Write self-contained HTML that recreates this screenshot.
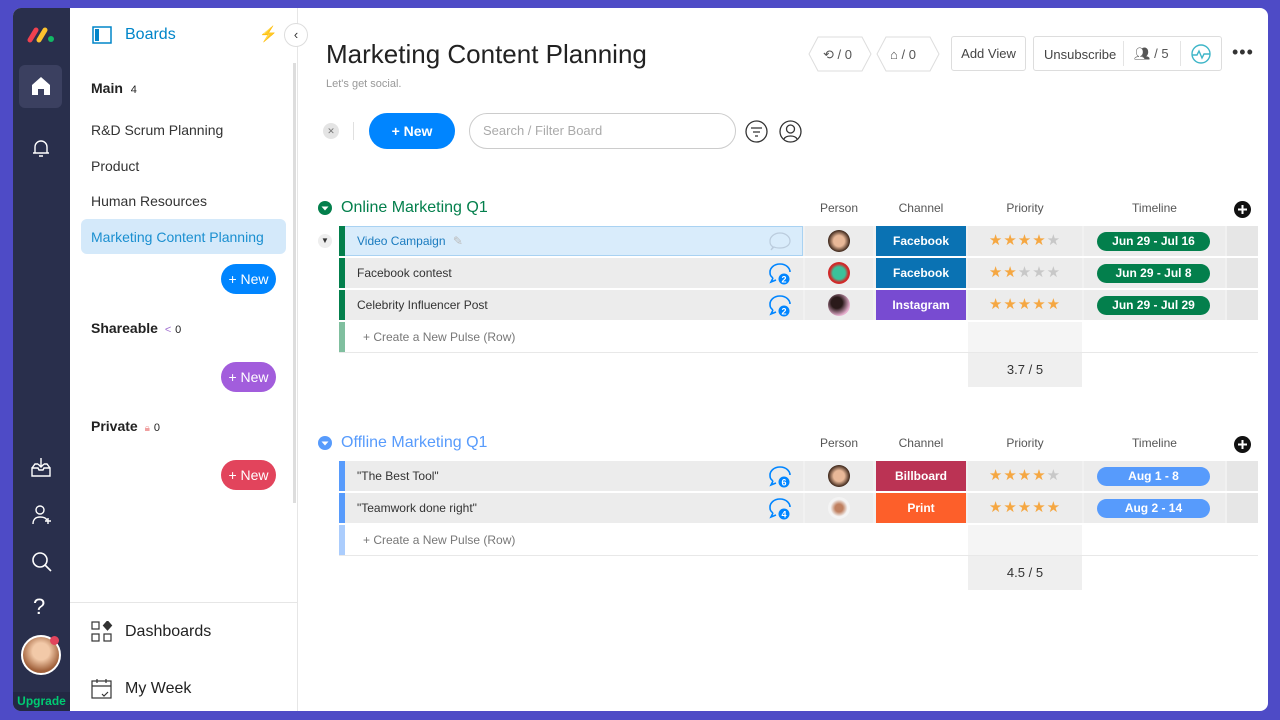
<!DOCTYPE html>
<html><head><meta charset="utf-8"><style>
*{box-sizing:border-box;margin:0;padding:0}
body{width:1280px;height:720px;background:#4e4bc6;font-family:"Liberation Sans",sans-serif;position:relative;overflow:hidden;color:#333}
.a{position:absolute}
#win{left:13px;top:8px;width:1255px;height:703px;background:#fff;border-radius:8px;overflow:hidden}
#dark{left:0;top:0;width:57px;height:703px;background:#292f4c}
.btn{position:absolute;height:30px;border-radius:15px;color:#fff;font-size:14px;font-weight:bold;text-align:center;line-height:30px}
.nav{position:absolute;left:78px;font-size:14px;color:#333}
.row{position:absolute;left:326px;width:919px;height:30px;background:#f1f1f1}
.cell{position:absolute;top:0;height:30px;background:#ececec}
.tag{position:absolute;top:0;height:30px;color:#fff;font-size:12px;font-weight:bold;text-align:center;line-height:30px}
.pill{position:absolute;top:6px;height:19px;border-radius:10px;color:#fff;font-size:12px;font-weight:bold;text-align:center;line-height:19px}
.stars{position:absolute;top:0;line-height:30px;font-size:15px;letter-spacing:1px;text-align:center}
.on{color:#f5a742}.off{color:#c8c8c8}
.hdr{position:absolute;font-size:12px;color:#555;text-align:center}
.av{position:absolute;top:4px;width:22px;height:22px;border-radius:50%}
.nm{position:absolute;left:18px;top:0;line-height:30px;font-size:12px;color:#333}
</style></head><body>
<div id="win" class="a">
 <div id="dark" class="a">
  <svg class="a" style="left:13px;top:18px" width="30" height="18" viewBox="0 0 30 18"><line x1="4" y1="14" x2="10" y2="4" stroke="#f0414f" stroke-width="5" stroke-linecap="round"/><line x1="13" y1="14" x2="19" y2="4" stroke="#fdc32e" stroke-width="5" stroke-linecap="round"/><circle cx="25" cy="13" r="3" fill="#12b865"/></svg>
  <div class="a" style="left:6px;top:57px;width:43px;height:43px;background:#3b4060;border-radius:6px"></div>
  <svg class="a" style="left:16px;top:66px" width="24" height="24" viewBox="0 0 24 24"><path d="M3 11L12 3l9 8v10h-6v-6h-6v6H3z" fill="#fff"/></svg>
  <svg class="a" style="left:19px;top:130px" width="18" height="20" viewBox="0 0 18 20" fill="none" stroke="#fff" stroke-width="1.4"><path d="M3 15V9a6 6 0 0112 0v6h2H1h2M7 18h4"/></svg>
  <svg class="a" style="left:17px;top:448px" width="22" height="22" viewBox="0 0 22 22" fill="none" stroke="#fff" stroke-width="1.4"><path d="M2 12l3-4h3M20 12l-3-4h-3M2 12v8h18v-8h-6l-1 2h-4l-1-2zM11 2v9M8 8l3 3 3-3"/></svg>
  <svg class="a" style="left:18px;top:496px" width="22" height="22" viewBox="0 0 22 22" fill="none" stroke="#fff" stroke-width="1.4"><circle cx="9" cy="6" r="4"/><path d="M2 20c0-5 3-7 7-7s6 1 7 3M14 17h6M17 14v6"/></svg>
  <svg class="a" style="left:18px;top:543px" width="22" height="22" viewBox="0 0 22 22" fill="none" stroke="#fff" stroke-width="1.6"><circle cx="9" cy="9" r="7"/><path d="M14 14l6 6"/></svg>
  <div class="a" style="left:20px;top:586px;color:#fff;font-size:22px">?</div>
  <div class="a" style="left:8px;top:627px;width:40px;height:40px;border-radius:50%;border:2px solid #fff;background:radial-gradient(circle at 50% 40%,#f2c9a8 30%,#a0603a 70%)"></div>
  <div class="a" style="left:37px;top:628px;width:9px;height:9px;border-radius:50%;background:#e2445c"></div>
  <div class="a" style="left:0;top:684px;width:57px;height:19px;background:#232843;color:#00ca72;font-size:12px;font-weight:bold;text-align:center;line-height:19px">Upgrade</div>
 </div>
 <div class="a" style="left:284px;top:0;width:1px;height:703px;background:#e6e6e6"></div>
 <div class="a" style="left:280px;top:55px;width:3px;height:440px;background:#ddd"></div>
 <svg class="a" style="left:79px;top:18px" width="20" height="18"><rect x="1" y="1" width="18" height="16" fill="none" stroke="#0085c9" stroke-width="1.5"/><rect x="3" y="3" width="4" height="12" fill="#0085c9"/></svg>
 <div class="a" style="left:112px;top:18px;font-size:16px;color:#0085c9">Boards</div>
 <div class="a" style="left:246px;top:17px;color:#fcc12b;font-size:15px">⚡</div>
 <div class="a" style="left:271px;top:15px;width:24px;height:24px;border-radius:50%;border:1px solid #ddd;background:#fff;text-align:center;line-height:21px;font-size:13px;color:#333">‹</div>
 <div class="a" style="left:78px;top:72px;font-size:14px;font-weight:bold;color:#222">Main <span style="font-weight:normal;font-size:11px;margin-left:4px">4</span></div>
 <div class="nav" style="top:114px">R&amp;D Scrum Planning</div>
 <div class="nav" style="top:150px">Product</div>
 <div class="nav" style="top:185px">Human Resources</div>
 <div class="a" style="left:68px;top:211px;width:205px;height:35px;background:#d4e9fa;border-radius:6px"></div>
 <div class="nav" style="top:221px;color:#1a8fd0">Marketing Content Planning</div>
 <div class="btn" style="left:208px;top:256px;width:55px;background:#0085ff;font-weight:normal">+ New</div>
 <div class="a" style="left:78px;top:312px;font-size:14px;font-weight:bold;color:#222">Shareable <span style="font-weight:normal;font-size:11px;color:#a070d0;margin-left:3px">&lt;</span> <span style="font-weight:normal;font-size:11px;color:#222">0</span></div>
 <div class="btn" style="left:208px;top:354px;width:55px;background:#a25ddc;font-weight:normal">+ New</div>
 <div class="a" style="left:78px;top:410px;font-size:14px;font-weight:bold;color:#222">Private <span style="font-weight:normal;font-size:10px;color:#f0a0a0;margin-left:3px">🔒︎</span> <span style="font-weight:normal;font-size:11px">0</span></div>
 <div class="btn" style="left:208px;top:452px;width:55px;background:#e2445c;font-weight:normal">+ New</div>
 <div class="a" style="left:57px;top:594px;width:227px;height:1px;background:#e6e6e6"></div>
 <svg class="a" style="left:78px;top:613px" width="22" height="22" fill="none" stroke="#333" stroke-width="1.2"><rect x="1" y="1" width="7" height="7"/><rect x="1" y="13" width="7" height="7"/><rect x="13" y="13" width="7" height="7"/><path d="M16.5 0l4 4.5-4 4.5-4-4.5z" fill="#333"/></svg>
 <div class="a" style="left:112px;top:615px;font-size:16px;color:#222">Dashboards</div>
 <svg class="a" style="left:78px;top:670px" width="22" height="22" fill="none" stroke="#333" stroke-width="1.2"><rect x="1" y="3" width="19" height="17"/><path d="M1 8h19M6 1v4M15 1v4M11 16l2 2 4-4"/></svg>
 <div class="a" style="left:112px;top:672px;font-size:16px;color:#222">My Week</div>
 <div class="a" style="left:313px;top:31px;font-size:26px;color:#222">Marketing Content Planning</div>
 <div class="a" style="left:313px;top:70px;font-size:11px;color:#999">Let's get social.</div>
 <svg class="a" style="left:795px;top:28px" width="140" height="36" fill="none" stroke="#ddd"><path d="M10 1h44l9 17-9 17H10L1 18z"/><path d="M78 1h44l9 17-9 17H78l-9-17z"/></svg>
 <div class="a" style="left:810px;top:39px;font-size:13px;color:#555">⟲ / 0</div>
 <div class="a" style="left:877px;top:39px;font-size:13px;color:#555">⌂ / 0</div>
 <div class="a" style="left:938px;top:28px;width:75px;height:35px;border:1px solid #ddd;border-radius:3px;font-size:13px;color:#444;text-align:center;line-height:33px">Add View</div>
 <div class="a" style="left:1020px;top:28px;width:189px;height:35px;border:1px solid #ddd;border-radius:3px"></div>
 <div class="a" style="left:1031px;top:39px;font-size:13px;color:#444">Unsubscribe</div>
 <div class="a" style="left:1110px;top:33px;width:1px;height:25px;background:#e4e4e4"></div>
 <div class="a" style="left:1121px;top:38px;font-size:13px;color:#555">👥︎ / 5</div>
 <div class="a" style="left:1167px;top:33px;width:1px;height:25px;background:#e4e4e4"></div>
 <svg class="a" style="left:1178px;top:36px" width="20" height="20" fill="none" stroke="#3fb6c8" stroke-width="1.4"><circle cx="10" cy="10" r="9"/><path d="M1 11h5l2-4 3 7 2-4h6"/></svg>
 <div class="a" style="left:1219px;top:34px;font-size:18px;color:#333;letter-spacing:1px">•••</div>
 <div class="a" style="left:310px;top:115px;width:16px;height:16px;border-radius:50%;background:#e4e4e4;font-size:9px;text-align:center;line-height:16px;color:#777">✕</div>
 <div class="a" style="left:340px;top:114px;width:1px;height:18px;background:#e0e0e0"></div>
 <div class="btn" style="left:356px;top:105px;width:86px;height:36px;line-height:36px;border-radius:18px;background:#0085ff">+ New</div>
 <div class="a" style="left:456px;top:105px;width:267px;height:36px;border:1px solid #ccc;border-radius:18px;font-size:13px;color:#aaa;padding-left:13px;line-height:34px">Search / Filter Board</div>
 <svg class="a" style="left:732px;top:112px" width="23" height="23" fill="none" stroke="#333" stroke-width="1.3"><circle cx="11.5" cy="11.5" r="10.5"/><path d="M6 8h11M8 12h7M10 16h3"/></svg>
 <svg class="a" style="left:766px;top:112px" width="23" height="23" fill="none" stroke="#333" stroke-width="1.3"><circle cx="11.5" cy="11.5" r="10.5"/><circle cx="11.5" cy="9" r="4"/><path d="M5 19c2-4 11-4 13 0"/></svg>
 <svg class="a" style="left:305px;top:193px" width="14" height="14"><circle cx="7" cy="7" r="7" fill="#037f4c"/><path d="M3.5 5.5h7L7 9.5z" fill="#fff"/></svg>
 <div class="a" style="left:328px;top:191px;font-size:16px;color:#037f4c">Online Marketing Q1</div>
 <div class="hdr" style="left:792px;top:193px;width:68px">Person</div>
 <div class="hdr" style="left:863px;top:193px;width:90px">Channel</div>
 <div class="hdr" style="left:955px;top:193px;width:114px">Priority</div>
 <div class="hdr" style="left:1071px;top:193px;width:141px">Timeline</div>
 <svg class="a" style="left:1221px;top:193px" width="17" height="17"><circle cx="8.5" cy="8.5" r="8.5" fill="#111"/><path d="M8.5 4v9M4 8.5h9" stroke="#fff" stroke-width="2"/></svg>
 <div class="a" style="left:305px;top:226px;width:14px;height:14px;border-radius:50%;background:#eee;font-size:8px;text-align:center;line-height:14px;color:#333">▼</div>
 <div class="row" style="top:218px">
  <div class="cell" style="left:0;width:464px;background:#d9ecfb;border:1px solid #a9d2f2"></div>
  <div class="a" style="left:0;top:0;width:6px;height:30px;background:#037f4c"></div>
  <div class="nm" style="color:#1a7bbf">Video Campaign <span style="color:#bbb;margin-left:4px">✎</span></div>
  <svg class="a" style="left:430px;top:6px" width="22" height="19" fill="none" stroke="#bcd" stroke-width="1.2"><path d="M4 15c-3-2-3-4-3-6 0-4 4-8 10-8s10 4 10 8-4 7-10 7c-2 0-4 0-6-1l-3 3z"/></svg>
  <div class="cell" style="left:466px;width:68px"></div><div class="av" style="left:489px;background:radial-gradient(circle,#e8b898 35%,#3a2418 70%)"></div>
  <div class="tag" style="left:537px;width:90px;background:#0a72b3">Facebook</div>
  <div class="cell" style="left:629px;width:114px"></div><div class="stars" style="left:629px;width:114px"><span class="on">★★★★</span><span class="off">★</span></div>
  <div class="cell" style="left:745px;width:141px"></div><div class="pill" style="left:758px;width:113px;background:#037f4c">Jun 29 - Jul 16</div>
  <div class="cell" style="left:888px;width:31px;background:#e6e6e6"></div>
 </div>
 <div class="row" style="top:250px">
  <div class="cell" style="left:0;width:464px"></div>
  <div class="a" style="left:0;top:0;width:6px;height:30px;background:#037f4c"></div>
  <div class="nm">Facebook contest</div>
  <svg class="a" style="left:430px;top:5px" width="22" height="22" fill="none" stroke="#0085ff" stroke-width="1.6"><path d="M4 15c-3-2-3-4-3-6 0-4 4-8 10-8s10 4 10 8"/><path d="M4 15l-2 4 5-2"/><circle cx="15" cy="16" r="5.5" fill="#0085ff" stroke="none"/><text x="15" y="19.5" font-size="9" fill="#fff" stroke="none" text-anchor="middle" font-family="Liberation Sans" font-weight="bold">2</text></svg>
  <div class="cell" style="left:466px;width:68px"></div><div class="av" style="left:489px;background:radial-gradient(circle,#3cc19a 40%,#d02a2a 60%)"></div>
  <div class="tag" style="left:537px;width:90px;background:#0a72b3">Facebook</div>
  <div class="cell" style="left:629px;width:114px"></div><div class="stars" style="left:629px;width:114px"><span class="on">★★</span><span class="off">★★★</span></div>
  <div class="cell" style="left:745px;width:141px"></div><div class="pill" style="left:758px;width:113px;background:#037f4c">Jun 29 - Jul 8</div>
  <div class="cell" style="left:888px;width:31px;background:#e6e6e6"></div>
 </div>
 <div class="row" style="top:282px">
  <div class="cell" style="left:0;width:464px"></div>
  <div class="a" style="left:0;top:0;width:6px;height:30px;background:#037f4c"></div>
  <div class="nm">Celebrity Influencer Post</div>
  <svg class="a" style="left:430px;top:5px" width="22" height="22" fill="none" stroke="#0085ff" stroke-width="1.6"><path d="M4 15c-3-2-3-4-3-6 0-4 4-8 10-8s10 4 10 8"/><path d="M4 15l-2 4 5-2"/><circle cx="15" cy="16" r="5.5" fill="#0085ff" stroke="none"/><text x="15" y="19.5" font-size="9" fill="#fff" stroke="none" text-anchor="middle" font-family="Liberation Sans" font-weight="bold">2</text></svg>
  <div class="cell" style="left:466px;width:68px"></div><div class="av" style="left:489px;background:radial-gradient(circle at 40% 40%,#2a1a1a 30%,#e8b0d0 70%)"></div>
  <div class="tag" style="left:537px;width:90px;background:#784bd1">Instagram</div>
  <div class="cell" style="left:629px;width:114px"></div><div class="stars" style="left:629px;width:114px"><span class="on">★★★★★</span></div>
  <div class="cell" style="left:745px;width:141px"></div><div class="pill" style="left:758px;width:113px;background:#037f4c">Jun 29 - Jul 29</div>
  <div class="cell" style="left:888px;width:31px;background:#e6e6e6"></div>
 </div>
 <div class="a" style="left:326px;top:314px;width:919px;height:31px;border-bottom:1px solid #e8e8e8"></div>
 <div class="a" style="left:326px;top:314px;width:6px;height:30px;background:#80bf9f"></div>
 <div class="a" style="left:350px;top:322px;font-size:12px;color:#777">+ Create a New Pulse (Row)</div>
 <div class="a" style="left:955px;top:314px;width:114px;height:30px;background:#f5f5f5"></div>
 <div class="a" style="left:955px;top:345px;width:114px;height:34px;background:#efefef;font-size:13px;text-align:center;line-height:34px;color:#333">3.7 / 5</div>
 <svg class="a" style="left:305px;top:428px" width="14" height="14"><circle cx="7" cy="7" r="7" fill="#579bfc"/><path d="M3.5 5.5h7L7 9.5z" fill="#fff"/></svg>
 <div class="a" style="left:328px;top:426px;font-size:16px;color:#579bfc">Offline Marketing Q1</div>
 <div class="hdr" style="left:792px;top:428px;width:68px">Person</div>
 <div class="hdr" style="left:863px;top:428px;width:90px">Channel</div>
 <div class="hdr" style="left:955px;top:428px;width:114px">Priority</div>
 <div class="hdr" style="left:1071px;top:428px;width:141px">Timeline</div>
 <svg class="a" style="left:1221px;top:428px" width="17" height="17"><circle cx="8.5" cy="8.5" r="8.5" fill="#111"/><path d="M8.5 4v9M4 8.5h9" stroke="#fff" stroke-width="2"/></svg>
 <div class="row" style="top:453px">
  <div class="cell" style="left:0;width:464px"></div>
  <div class="a" style="left:0;top:0;width:6px;height:30px;background:#579bfc"></div>
  <div class="nm">"The Best Tool"</div>
  <svg class="a" style="left:430px;top:5px" width="22" height="22" fill="none" stroke="#0085ff" stroke-width="1.6"><path d="M4 15c-3-2-3-4-3-6 0-4 4-8 10-8s10 4 10 8"/><path d="M4 15l-2 4 5-2"/><circle cx="15" cy="16" r="5.5" fill="#0085ff" stroke="none"/><text x="15" y="19.5" font-size="9" fill="#fff" stroke="none" text-anchor="middle" font-family="Liberation Sans" font-weight="bold">6</text></svg>
  <div class="cell" style="left:466px;width:68px"></div><div class="av" style="left:489px;background:radial-gradient(circle,#e8b898 35%,#3a2418 70%)"></div>
  <div class="tag" style="left:537px;width:90px;background:#bb3354">Billboard</div>
  <div class="cell" style="left:629px;width:114px"></div><div class="stars" style="left:629px;width:114px"><span class="on">★★★★</span><span class="off">★</span></div>
  <div class="cell" style="left:745px;width:141px"></div><div class="pill" style="left:758px;width:113px;background:#579bfc">Aug 1 - 8</div>
  <div class="cell" style="left:888px;width:31px;background:#e6e6e6"></div>
 </div>
 <div class="row" style="top:485px">
  <div class="cell" style="left:0;width:464px"></div>
  <div class="a" style="left:0;top:0;width:6px;height:30px;background:#579bfc"></div>
  <div class="nm">"Teamwork done right"</div>
  <svg class="a" style="left:430px;top:5px" width="22" height="22" fill="none" stroke="#0085ff" stroke-width="1.6"><path d="M4 15c-3-2-3-4-3-6 0-4 4-8 10-8s10 4 10 8"/><path d="M4 15l-2 4 5-2"/><circle cx="15" cy="16" r="5.5" fill="#0085ff" stroke="none"/><text x="15" y="19.5" font-size="9" fill="#fff" stroke="none" text-anchor="middle" font-family="Liberation Sans" font-weight="bold">4</text></svg>
  <div class="cell" style="left:466px;width:68px"></div><div class="av" style="left:489px;background:radial-gradient(circle,#c08060 25%,#f4f4f4 55%)"></div>
  <div class="tag" style="left:537px;width:90px;background:#fd5f2a">Print</div>
  <div class="cell" style="left:629px;width:114px"></div><div class="stars" style="left:629px;width:114px"><span class="on">★★★★★</span></div>
  <div class="cell" style="left:745px;width:141px"></div><div class="pill" style="left:758px;width:113px;background:#579bfc">Aug 2 - 14</div>
  <div class="cell" style="left:888px;width:31px;background:#e6e6e6"></div>
 </div>
 <div class="a" style="left:326px;top:517px;width:919px;height:31px;border-bottom:1px solid #e8e8e8"></div>
 <div class="a" style="left:326px;top:517px;width:6px;height:30px;background:#abcdfd"></div>
 <div class="a" style="left:350px;top:525px;font-size:12px;color:#777">+ Create a New Pulse (Row)</div>
 <div class="a" style="left:955px;top:517px;width:114px;height:30px;background:#f5f5f5"></div>
 <div class="a" style="left:955px;top:548px;width:114px;height:34px;background:#efefef;font-size:13px;text-align:center;line-height:34px;color:#333">4.5 / 5</div>
</div>
</body></html>
